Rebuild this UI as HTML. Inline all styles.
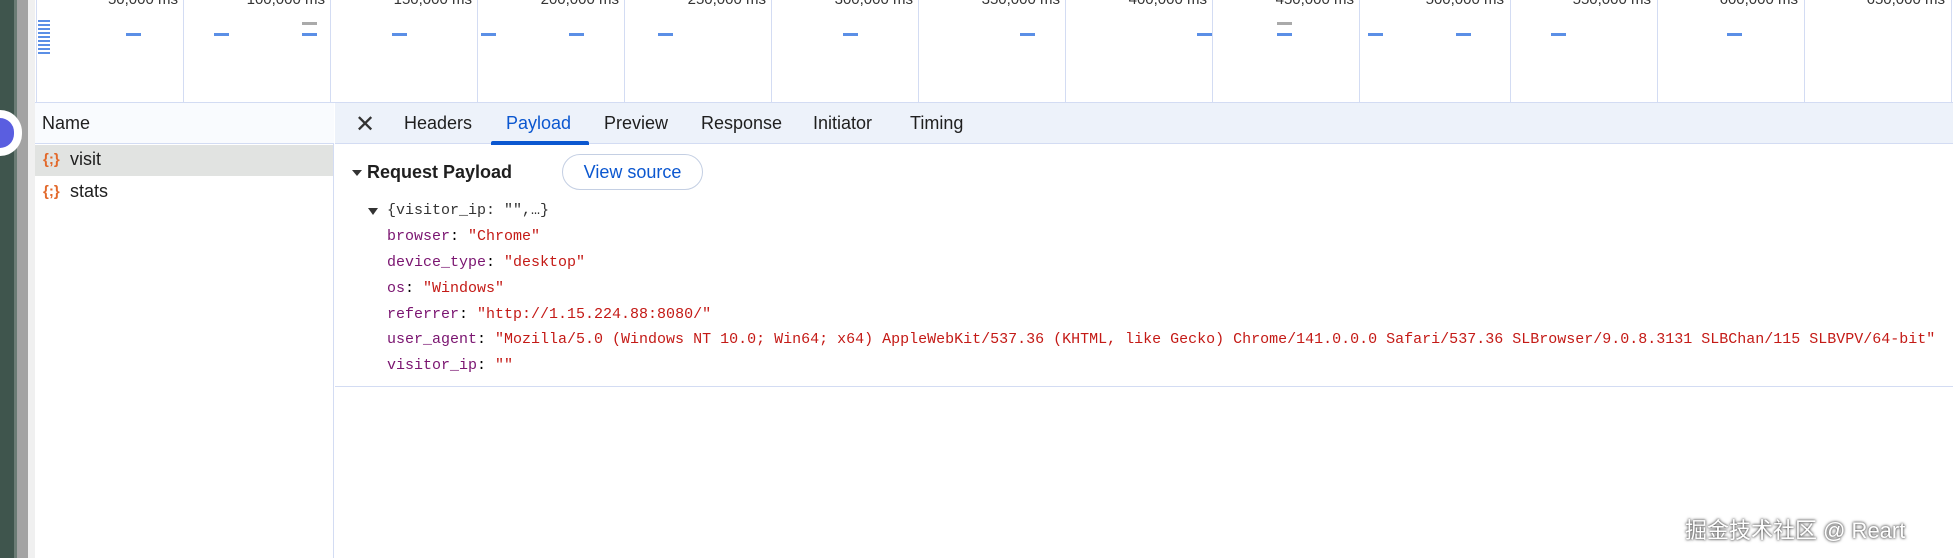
<!DOCTYPE html>
<html><head><meta charset="utf-8"><style>
*{margin:0;padding:0;box-sizing:border-box}
body{width:1953px;height:558px;overflow:hidden;background:#fff;position:relative;font-family:"Liberation Sans",Arial,sans-serif}
.a{position:absolute}
.vl{position:absolute;top:0;width:1px;height:103px;background:#d3dcf3}
.lbl{position:absolute;top:-9px;font-size:15px;color:#333;text-align:right;width:120px}
.d{position:absolute;top:33px;width:15px;height:3px;background:#5b8fe6}
.mono{font-family:"Liberation Mono",monospace;font-size:15px;position:absolute;left:387px;white-space:pre}
.k{color:#7a1470}.s{color:#c41a16}
.tab{position:absolute;top:113px;font-size:18px;color:#1f1f1f}
</style></head><body>
<div class="a" style="left:0;top:0;width:14px;height:558px;background:#3f554d"></div>
<div class="a" style="left:14px;top:0;width:4px;height:558px;background:#6b7c75"></div>
<div class="a" style="left:17px;top:0;width:11px;height:558px;background:#a3a3a3"></div>
<div class="a" style="left:28px;top:0;width:7px;height:558px;background:#f0f0f0"></div>
<div class="a" style="left:35px;top:0;width:1918px;height:103px;background:#fff"></div>
<div class="vl" style="left:36px"></div>
<div class="vl" style="left:183px"></div><div class="vl" style="left:330px"></div><div class="vl" style="left:477px"></div><div class="vl" style="left:624px"></div><div class="vl" style="left:771px"></div><div class="vl" style="left:918px"></div><div class="vl" style="left:1065px"></div><div class="vl" style="left:1212px"></div><div class="vl" style="left:1359px"></div><div class="vl" style="left:1510px"></div><div class="vl" style="left:1657px"></div><div class="vl" style="left:1804px"></div><div class="vl" style="left:1951px"></div>
<div class="lbl" style="left:58px">50,000 ms</div><div class="lbl" style="left:205px">100,000 ms</div><div class="lbl" style="left:352px">150,000 ms</div><div class="lbl" style="left:499px">200,000 ms</div><div class="lbl" style="left:646px">250,000 ms</div><div class="lbl" style="left:793px">300,000 ms</div><div class="lbl" style="left:940px">350,000 ms</div><div class="lbl" style="left:1087px">400,000 ms</div><div class="lbl" style="left:1234px">450,000 ms</div><div class="lbl" style="left:1384px">500,000 ms</div><div class="lbl" style="left:1531px">550,000 ms</div><div class="lbl" style="left:1678px">600,000 ms</div><div class="lbl" style="left:1825px">650,000 ms</div>
<div class="a" style="left:38px;top:20px;width:12px;height:35px;background:repeating-linear-gradient(#5b8fe6 0 2px,#fff 2px 4px)"></div>
<div class="d" style="left:126px"></div><div class="d" style="left:214px"></div><div class="d" style="left:302px"></div><div class="d" style="background:#aaa;left:302px;top:22px"></div><div class="d" style="left:392px"></div><div class="d" style="left:481px"></div><div class="d" style="left:569px"></div><div class="d" style="left:658px"></div><div class="d" style="left:843px"></div><div class="d" style="left:1020px"></div><div class="d" style="left:1197px"></div><div class="d" style="left:1277px"></div><div class="d" style="left:1277px;top:22px;background:#aaa"></div><div class="d" style="left:1368px"></div><div class="d" style="left:1456px"></div><div class="d" style="left:1551px"></div><div class="d" style="left:1727px"></div>
<div class="a" style="left:35px;top:102px;width:1918px;height:1px;background:#d3dcf3"></div>
<div class="a" style="left:35px;top:103px;width:299px;height:455px;background:#fff;border-right:1px solid #d3dcf3"></div>
<div class="a" style="left:35px;top:103px;width:299px;height:41px;background:#f9fbfe;border-bottom:1px solid #d3dcf3"></div>
<div class="a" style="left:42px;top:113px;font-size:18px;color:#1f1f1f">Name</div>
<div class="a" style="left:35px;top:145px;width:298px;height:31px;background:#e1e3e1"></div>
<div class="a" style="left:43px;top:151px;font-size:15px;color:#e2692b;font-weight:bold">{;}</div>
<div class="a" style="left:70px;top:149px;font-size:18px;color:#1f1f1f">visit</div>
<div class="a" style="left:43px;top:183px;font-size:15px;color:#e2692b;font-weight:bold">{;}</div>
<div class="a" style="left:70px;top:181px;font-size:18px;color:#1f1f1f">stats</div>
<div class="a" style="left:0;top:110px;width:22px;height:46px;border-radius:0 23px 23px 0;background:#fff"></div>
<div class="a" style="left:0;top:118px;width:14px;height:30px;border-radius:0 15px 15px 0;background:#5a5ee0"></div>
<div class="a" style="left:335px;top:103px;width:1618px;height:41px;background:#edf2fa;border-bottom:1px solid #d3dcf3"></div>
<div class="a" style="left:355px;top:110px;font-size:24px;color:#333">✕</div>
<div class="tab" style="left:404px">Headers</div>
<div class="tab" style="left:506px;color:#0b57d0">Payload</div>
<div class="tab" style="left:604px">Preview</div>
<div class="tab" style="left:701px">Response</div>
<div class="tab" style="left:813px">Initiator</div>
<div class="tab" style="left:910px">Timing</div>
<div class="a" style="left:491px;top:141px;width:98px;height:4px;border-radius:2px 2px 0 0;background:#0b57d0"></div>
<div class="a" style="left:352px;top:170px;width:0;height:0;border-left:5px solid transparent;border-right:5px solid transparent;border-top:6px solid #333"></div>
<div class="a" style="left:367px;top:162px;font-size:18px;font-weight:bold;color:#1f1f1f">Request Payload</div>
<div class="a" style="left:562px;top:154px;width:141px;height:36px;border:1px solid #c4cfe3;border-radius:18px;font-size:18px;color:#0b57d0;text-align:center;line-height:34px">View source</div>
<div class="a" style="left:368px;top:208px;width:0;height:0;border-left:5px solid transparent;border-right:5px solid transparent;border-top:7px solid #333"></div>
<div class="mono" style="top:202px;color:#333">{visitor_ip: "",…}</div>
<div class="mono" style="top:228px"><span class="k">browser</span>: <span class="s">"Chrome"</span></div>
<div class="mono" style="top:254px"><span class="k">device_type</span>: <span class="s">"desktop"</span></div>
<div class="mono" style="top:280px"><span class="k">os</span>: <span class="s">"Windows"</span></div>
<div class="mono" style="top:306px"><span class="k">referrer</span>: <span class="s">"http://1.15.224.88:8080/"</span></div>
<div class="mono" style="top:331px"><span class="k">user_agent</span>: <span class="s">"Mozilla/5.0 (Windows NT 10.0; Win64; x64) AppleWebKit/537.36 (KHTML, like Gecko) Chrome/141.0.0.0 Safari/537.36 SLBrowser/9.0.8.3131 SLBChan/115 SLBVPV/64-bit"</span></div>
<div class="mono" style="top:357px"><span class="k">visitor_ip</span>: <span class="s">""</span></div>
<div class="a" style="left:335px;top:386px;width:1618px;height:1px;background:#d3dcf3"></div>
<div class="a" style="left:1685px;top:513px;font-size:22px;color:#fff;text-shadow:0 0 3px #555,0 0 2px #555;font-family:'Liberation Sans','Noto Sans CJK SC',sans-serif">掘金技术社区 @ Reart</div>
</body></html>
